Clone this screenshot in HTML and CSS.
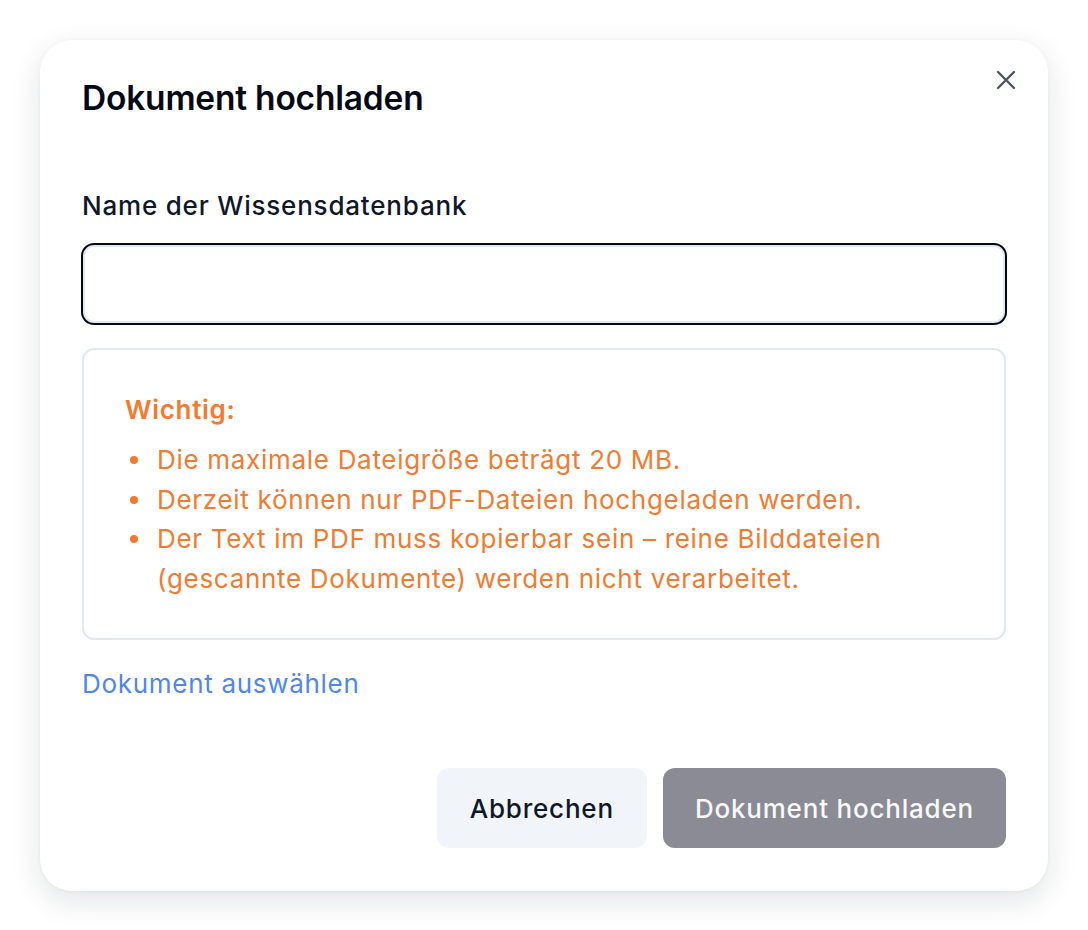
FILE: index.html
```html
<!DOCTYPE html>
<html lang="de">
<head>
    <meta charset="UTF-8">
    <meta name="viewport" content="width=device-width, initial-scale=1.0">
    <title>Dokument hochladen</title>
    <link rel="stylesheet" href="styles.css">
</head>
<body>
    <div class="dialog">
        <button class="close" aria-label="Schließen">
            <svg width="20" height="20" viewBox="0 0 20 20" fill="none" stroke="currentColor" stroke-width="2.4" stroke-linecap="round">
                <path d="M2 2 18 18M18 2 2 18"/>
            </svg>
        </button>
        <h2 class="title">Dokument hochladen</h2>

        <label class="label" for="kbName">Name der Wissensdatenbank</label>
        <input class="input" type="text" id="kbName" name="kbName">

        <div class="notice">
            <p class="notice-title">Wichtig:</p>
            <ul class="notice-list">
                <li>Die maximale Dateigröße beträgt 20 MB.</li>
                <li>Derzeit können nur PDF-Dateien hochgeladen werden.</li>
                <li>Der Text im PDF muss kopierbar sein – reine Bilddateien (gescannte Dokumente) werden nicht verarbeitet.</li>
            </ul>
        </div>

        <a class="pick" href="#">Dokument auswählen</a>

        <div class="actions">
            <button class="btn btn-secondary">Abbrechen</button>
            <button class="btn btn-primary" disabled>Dokument hochladen</button>
        </div>
    </div>
</body>
</html>
```

FILE: styles.css
```css
* {
    box-sizing: border-box;
}

body {
    margin: 0;
    padding: 40px;
    background-color: #fff;
    font-family: Inter, "Noto Sans", sans-serif;
    color: #0f172a;
}

.dialog {
    position: relative;
    width: 1008px;
    padding: 38px 42px 43px 42px;
    background-color: #fff;
    border-radius: 32px;
    box-shadow: 0 10px 30px rgba(15, 23, 42, 0.12), 0 0 4px rgba(15, 23, 42, 0.04);
    display: flex;
    flex-direction: column;
}

.close {
    position: absolute;
    top: 30px;
    right: 32px;
    padding: 0;
    border: none;
    background: none;
    color: #4b5563;
    display: flex;
    cursor: pointer;
}

.title {
    margin: 0;
    font-size: 33.5px;
    line-height: 40px;
    font-weight: 600;
    letter-spacing: -0.2px;
    color: #020817;
}

.label {
    margin-top: 70px;
    font-size: 26px;
    line-height: 36px;
    font-weight: 500;
    letter-spacing: 0.8px;
}

.input {
    margin: 21px 1px 0 1px;
    height: 78px;
    border: 2px solid #e2e8f0;
    border-radius: 11px;
    box-shadow: 0 0 0 2px #020817;
    outline: none;
    font: inherit;
    font-size: 26px;
    padding: 0 24px;
}

.notice {
    margin-top: 25px;
    border: 2px solid #e2e8f0;
    border-radius: 12px;
    padding: 40px 41px 40px 41px;
    color: #f47a2f;
    font-size: 26px;
    line-height: 40px;
    letter-spacing: 0.7px;
}

.notice-title {
    margin: 0 0 10px 0;
    font-weight: 600;
}

.notice-list {
    margin: 0;
    padding: 0;
    list-style: none;
    line-height: 39.5px;
}

.notice-list li {
    position: relative;
    padding-left: 32px;
}

.notice-list li::before {
    content: "";
    position: absolute;
    left: 5px;
    top: 16px;
    width: 8px;
    height: 8px;
    border-radius: 50%;
    background-color: #f47a2f;
}

.pick {
    margin-top: 26px;
    align-self: flex-start;
    font-size: 26px;
    line-height: 36px;
    letter-spacing: 0.7px;
    color: #4f87f2;
    text-decoration: none;
}

.actions {
    margin-top: 66px;
    display: flex;
    justify-content: flex-end;
    gap: 16px;
}

.btn {
    height: 80px;
    padding: 0 33px;
    border: none;
    border-radius: 12px;
    font-family: inherit;
    font-size: 26px;
    font-weight: 500;
    letter-spacing: 0.8px;
    cursor: pointer;
}

.btn-secondary {
    background-color: #f1f5f9;
    color: #0f172a;
}

.btn-primary {
    padding: 0 32px;
    background-color: #8a8b94;
    color: #f8f8fa;
    cursor: default;
}
```
